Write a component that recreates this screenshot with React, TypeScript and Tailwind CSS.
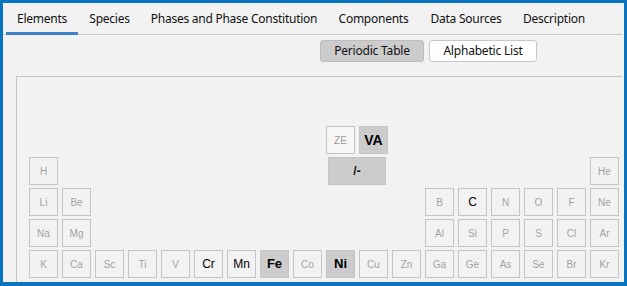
import React from "react";

type Cell = {
  sym: string;
  col: number;
  row: number;
  kind?: "dim" | "on" | "sel" | "va" | "ze";
};

const rows: { row: number; items: [string, number][] }[] = [
  { row: 2, items: [["H", 1], ["He", 18]] },
  {
    row: 3,
    items: [["Li", 1], ["Be", 2], ["B", 13], ["C", 14], ["N", 15], ["O", 16], ["F", 17], ["Ne", 18]],
  },
  {
    row: 4,
    items: [["Na", 1], ["Mg", 2], ["Al", 13], ["Si", 14], ["P", 15], ["S", 16], ["Cl", 17], ["Ar", 18]],
  },
  {
    row: 5,
    items: "K Ca Sc Ti V Cr Mn Fe Co Ni Cu Zn Ga Ge As Se Br Kr".split(" ").map((s, i) => [s, i + 1] as [string, number]),
  },
];

const active = ["Cr", "Mn", "C"];
const selected = ["Fe", "Ni"];

const cells: Cell[] = [
  { sym: "ZE", col: 10, row: 1, kind: "ze" },
  { sym: "VA", col: 11, row: 1, kind: "va" },
  ...rows.flatMap((r) =>
    r.items.map(([sym, col]) => ({
      sym,
      col,
      row: r.row,
      kind: (selected.includes(sym) ? "sel" : active.includes(sym) ? "on" : "dim") as Cell["kind"],
    }))
  ),
];

const tabs = [
  { label: "Elements", w: "w-[72px]" },
  { label: "Species", w: "w-[63px]" },
  { label: "Phases and Phase Constitution", w: "w-[186px]" },
  { label: "Components", w: "w-[93px]" },
  { label: "Data Sources", w: "w-[92px]" },
  { label: "Description", w: "w-[84px]" },
];

function ElementCell({ cell }: { cell: Cell }) {
  const style: React.CSSProperties = { gridColumnStart: cell.col, gridRowStart: cell.row };
  const base = "flex items-center justify-center border border-[#c4c4c4] font-['Liberation_Sans',Arial,sans-serif]";
  const look =
    cell.kind === "sel"
      ? "bg-[#cccccc] text-black text-[13px] font-bold"
      : cell.kind === "va"
      ? "bg-[#cccccc] text-black text-[14px] font-bold"
      : cell.kind === "on"
      ? "bg-[#f2f2f2] text-black text-[12px]"
      : cell.kind === "ze"
      ? "bg-[#f7f7f7] text-[#9a9a9a] text-[10px]"
      : "bg-[#f2f2f2] text-[#a3a3a3] text-[10px]";
  return (
    <div style={style} className={`${base} ${look}`}>
      {cell.sym}
    </div>
  );
}

export default function App() {
  return (
    <div className="w-[627px] h-[286px] overflow-hidden bg-[#f2f2f2] border-[#0b74bf] border-l-[3px] border-t-[3px] border-r-[3px] border-b-[4px] flex flex-col font-['Noto_Sans','Segoe_UI',sans-serif] text-[12px] text-[#111]">
      {/* Tab bar */}
      <div className="h-[32px] flex-shrink-0 flex pl-[3px] border-b border-[#c8c8c8] mr-[2px]">
        {tabs.map((t, i) => (
          <div key={t.label} className={`relative h-full flex items-center justify-center ${t.w}`}>
            <span className="whitespace-nowrap tracking-[-0.25px]">{t.label}</span>
            {i === 0 && <div className="absolute left-0 right-0 bottom-[-1px] h-[3px] bg-[#3b82c8]" />}
          </div>
        ))}
      </div>

      {/* View toggle */}
      <div className="flex gap-[5px] pl-[317px] mt-[5px] flex-shrink-0">
        <button className="w-[104px] h-[22px] rounded-[3px] bg-[#cccccc] border border-[#bdbdbd] text-[12px] tracking-[-0.2px]">
          Periodic Table
        </button>
        <button className="w-[108px] h-[22px] rounded-[3px] bg-white border border-[#c8c8c8] text-[12px] tracking-[-0.2px]">
          Alphabetic List
        </button>
      </div>

      {/* Periodic table panel */}
      <div className="flex-1 min-h-0 mt-[14px] ml-[13px] mr-[2px] border-l border-t border-[#c4c4c4] overflow-hidden pl-[12px] pt-[49px]">
        <div className="grid grid-cols-[repeat(18,29px)] auto-rows-[28px] gap-x-[4px] gap-y-[3px]">
          {cells.map((c) => (
            <ElementCell key={c.sym} cell={c} />
          ))}
          <div
            style={{ gridColumn: "10 / span 2", gridRowStart: 2 }}
            className="mx-[2px] flex items-center justify-center bg-[#cccccc] border border-[#c4c4c4] text-[12px] font-bold text-[#111] font-['Liberation_Sans',Arial,sans-serif]"
          >
            /-
          </div>
        </div>
      </div>
    </div>
  );
}
